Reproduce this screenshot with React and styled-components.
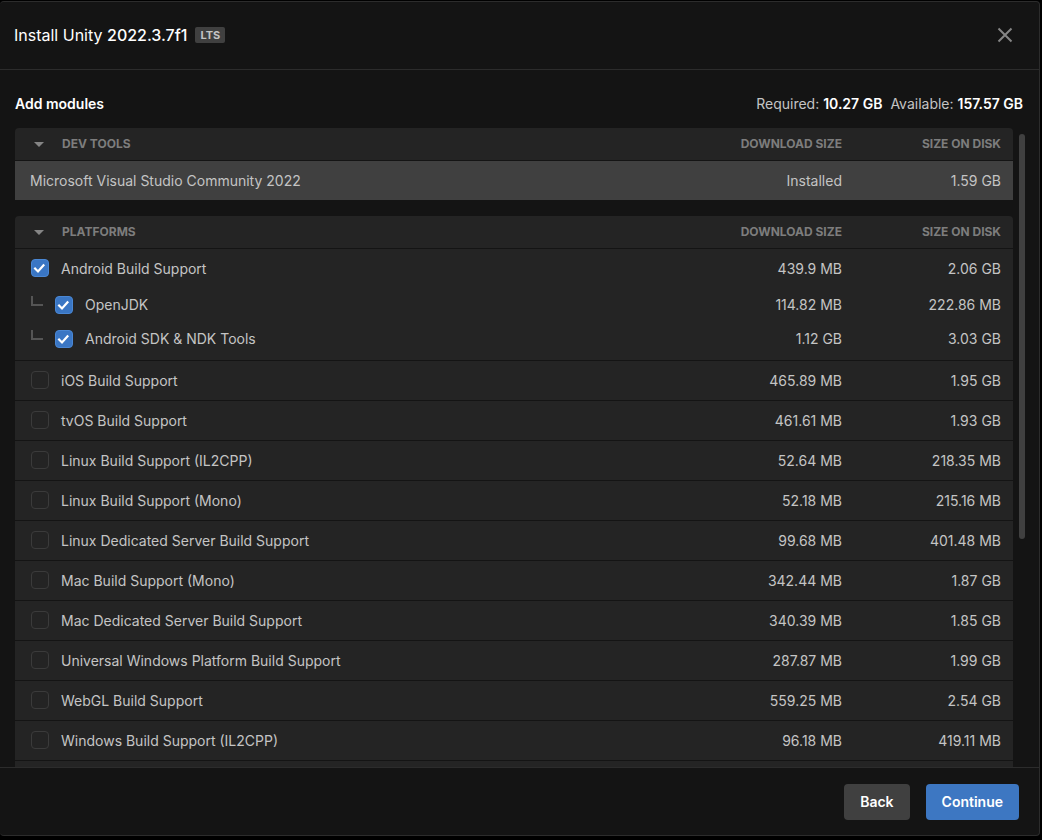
import React, { useState } from "react";
import styled, { createGlobalStyle } from "styled-components";

const GlobalStyle = createGlobalStyle`
  * { box-sizing: border-box; }
  body {
    margin: 0;
    background: #000;
    color: #c4c4c4;
    font: 400 14px/20px Inter, "Liberation Sans", sans-serif;
  }
  button { font: inherit; color: inherit; cursor: pointer; }
`;

const Page = styled.div`
  height: 100vh;
  padding: 1px 2px 4px 0;
  display: flex;
`;

const Dialog = styled.main`
  flex: 1;
  min-width: 0;
  display: flex;
  flex-direction: column;
  background: #141414;
  border: 1px solid #2c2c2c;
  border-left: 0;
  border-radius: 4px;
  overflow: hidden;
`;

const Header = styled.header`
  flex: none;
  height: 68px;
  padding: 0 26px 2px 14px;
  display: flex;
  align-items: center;
  justify-content: space-between;
  border-bottom: 1px solid #2c2c2c;
`;

const Title = styled.h1`
  margin: 0;
  display: flex;
  align-items: center;
  gap: 8px;
  color: #fff;
  font-size: 16px;
  line-height: 24px;
  font-weight: 400;

  strong { font-weight: 500; }
`;

const Badge = styled.span`
  padding: 0 5px;
  border-radius: 2px;
  background: #404040;
  color: #c4c4c4;
  font-size: 11px;
  line-height: 16px;
  font-weight: 700;
`;

const CloseButton = styled.button`
  display: flex;
  padding: 0;
  border: 0;
  background: none;
  color: #858585;
`;

const Summary = styled.div`
  flex: none;
  padding: 24px 16px 14px 15px;
  display: flex;
  justify-content: space-between;
`;

const SectionTitle = styled.h2`
  margin: 0;
  color: #fff;
  font-size: 14px;
  line-height: 20px;
  font-weight: 600;
`;

const Totals = styled.div`
  display: flex;
  gap: 8px;

  strong { color: #fff; font-weight: 600; }
`;

const Content = styled.div`
  flex: 1;
  min-height: 0;
  padding: 0 14px 0 15px;
  display: flex;
  gap: 6px;
`;

const Modules = styled.div`
  flex: 1;
  min-width: 0;
  overflow-y: auto;
  scrollbar-width: none;
  display: flex;
  flex-direction: column;
  gap: 16px;
`;

const Track = styled.div`
  width: 6px;
  padding-top: 6px;
`;

const Thumb = styled.div`
  height: 64%;
  border-radius: 3px;
  background: #404040;
`;

const Table = styled.table`
  flex: none;
  width: 100%;
  table-layout: fixed;
  border-spacing: 0;
  border-radius: 4px 4px 0 0;
  overflow: hidden;
  background: #242424;
`;

const SizeCol = styled.col`
  width: 159px;
`;

const HeadCell = styled.th`
  height: 33px;
  padding: 0 12px 1px 16px;
  border-bottom: 1px solid #141414;
  color: #7d7d7d;
  font-size: 12px;
  line-height: 16px;
  font-weight: 700;
  text-align: ${(p) => (p.$right ? "right" : "left")};
`;

const GroupTitle = styled.div`
  display: flex;
  align-items: center;
  gap: 15px;
`;

const CollapseButton = styled.button`
  width: 16px;
  height: 16px;
  padding: 0;
  border: 0;
  background: none;
  display: flex;
`;

const Row = styled.tr`
  height: ${(p) => p.$height}px;
  background: ${(p) => (p.$installed ? "#404040" : "transparent")};
`;

const Cell = styled.td`
  padding: 0 12px ${(p) => (p.$groupEnd ? 4 : 0)}px 15px;
  border-bottom: ${(p) => (p.$line ? "1px solid #141414" : "0")};
  text-align: ${(p) => (p.$right ? "right" : "left")};
  white-space: nowrap;
`;

const Option = styled.label`
  display: flex;
  align-items: center;
  gap: 12px;
  padding-left: 1px;
`;

const Branch = styled.span`
  width: 12px;
  height: 10px;
  margin-bottom: 8px;
  border: solid #555;
  border-width: 0 0 2px 2px;
`;

const Box = styled.span`
  display: grid;
  padding-bottom: ${(p) => (p.$child ? 0 : 2)}px;

  & > * { grid-area: 1 / 1; }
  & > svg { pointer-events: none; z-index: 1; }
`;

const Check = styled.input`
  appearance: none;
  width: 18px;
  height: 18px;
  margin: 0;
  border: 1px solid #3b3b3b;
  border-radius: 4px;

  &:checked {
    background: #3a76c4;
    border-color: #4a87d4;
  }
`;

const Footer = styled.footer`
  flex: none;
  height: 68px;
  padding: 0 20px;
  display: flex;
  align-items: center;
  justify-content: flex-end;
  gap: 16px;
  border-top: 1px solid #2c2c2c;
`;

const ActionButton = styled.button`
  height: 36px;
  padding: 0 16px;
  border: 0;
  border-radius: 4px;
  background: ${(p) => (p.$primary ? "#3d77c2" : "#404040")};
  color: #fff;
  font-weight: 600;
`;

const platforms = [
  { name: "Android Build Support", download: "439.9 MB", disk: "2.06 GB", checked: true, open: true },
  { name: "OpenJDK", download: "114.82 MB", disk: "222.86 MB", checked: true, child: true },
  { name: "Android SDK & NDK Tools", download: "1.12 GB", disk: "3.03 GB", checked: true, child: true, last: true },
  { name: "iOS Build Support", download: "465.89 MB", disk: "1.95 GB" },
  { name: "tvOS Build Support", download: "461.61 MB", disk: "1.93 GB" },
  { name: "Linux Build Support (IL2CPP)", download: "52.64 MB", disk: "218.35 MB" },
  { name: "Linux Build Support (Mono)", download: "52.18 MB", disk: "215.16 MB" },
  { name: "Linux Dedicated Server Build Support", download: "99.68 MB", disk: "401.48 MB" },
  { name: "Mac Build Support (Mono)", download: "342.44 MB", disk: "1.87 GB" },
  { name: "Mac Dedicated Server Build Support", download: "340.39 MB", disk: "1.85 GB" },
  { name: "Universal Windows Platform Build Support", download: "287.87 MB", disk: "1.99 GB" },
  { name: "WebGL Build Support", download: "559.25 MB", disk: "2.54 GB" },
  { name: "Windows Build Support (IL2CPP)", download: "96.18 MB", disk: "419.11 MB" },
];

function rowHeight(m) {
  if (m.last) return 39;
  if (m.child) return 34;
  return m.open ? 39 : 40;
}

function Group({ title, children }) {
  const [open, setOpen] = useState(true);
  return (
    <Table>
      <colgroup>
        <col />
        <SizeCol />
        <SizeCol />
      </colgroup>
      <thead>
        <tr>
          <HeadCell scope="col">
            <GroupTitle>
              <CollapseButton type="button" aria-label={title} aria-expanded={open} onClick={() => setOpen(!open)}>
                <svg width="16" height="16" viewBox="0 0 16 16" aria-hidden="true">
                  <path d="M3 6h10l-5 5z" fill="#858585" />
                </svg>
              </CollapseButton>
              {title}
            </GroupTitle>
          </HeadCell>
          <HeadCell scope="col" $right>DOWNLOAD SIZE</HeadCell>
          <HeadCell scope="col" $right>SIZE ON DISK</HeadCell>
        </tr>
      </thead>
      {open && <tbody>{children}</tbody>}
    </Table>
  );
}

function ModuleRow({ module }) {
  const [checked, setChecked] = useState(Boolean(module.checked));
  const line = !module.open && (!module.child || module.last);
  const cell = { $line: line, $groupEnd: module.last };
  return (
    <Row $height={rowHeight(module)}>
      <Cell {...cell}>
        <Option>
          {module.child && <Branch />}
          <Box $child={module.child}>
            <Check type="checkbox" checked={checked} onChange={(e) => setChecked(e.target.checked)} />
            {checked && (
              <svg width="18" height="18" viewBox="0 0 18 18" fill="none" aria-hidden="true">
                <path d="M3.3 8.8l3.7 3.7 6.2-6.9" stroke="#fff" strokeWidth="2.2" />
              </svg>
            )}
          </Box>
          {module.name}
        </Option>
      </Cell>
      <Cell {...cell} $right>{module.download}</Cell>
      <Cell {...cell} $right>{module.disk}</Cell>
    </Row>
  );
}

export default function App() {
  return (
    <>
      <GlobalStyle />
      <Page>
        <Dialog>
          <Header>
            <Title>
              <span>Install Unity <strong>2022.3.7f1</strong></span>
              <Badge>LTS</Badge>
            </Title>
            <CloseButton type="button" aria-label="Close">
              <svg width="16" height="16" viewBox="0 0 16 16" fill="none" aria-hidden="true">
                <path d="M1.5 1.5l13 13M14.5 1.5l-13 13" stroke="currentColor" strokeWidth="2" />
              </svg>
            </CloseButton>
          </Header>
          <Summary>
            <SectionTitle>Add modules</SectionTitle>
            <Totals>
              <span>Required: <strong>10.27 GB</strong></span>
              <span>Available: <strong>157.57 GB</strong></span>
            </Totals>
          </Summary>
          <Content>
            <Modules>
              <Group title="DEV TOOLS">
                <Row $height={39} $installed>
                  <Cell>Microsoft Visual Studio Community 2022</Cell>
                  <Cell $right>Installed</Cell>
                  <Cell $right>1.59 GB</Cell>
                </Row>
              </Group>
              <Group title="PLATFORMS">
                {platforms.map((m) => <ModuleRow key={m.name} module={m} />)}
                <Row $height={40}><Cell colSpan={3} /></Row>
              </Group>
            </Modules>
            <Track><Thumb /></Track>
          </Content>
          <Footer>
            <ActionButton type="button">Back</ActionButton>
            <ActionButton type="button" $primary>Continue</ActionButton>
          </Footer>
        </Dialog>
      </Page>
    </>
  );
}
